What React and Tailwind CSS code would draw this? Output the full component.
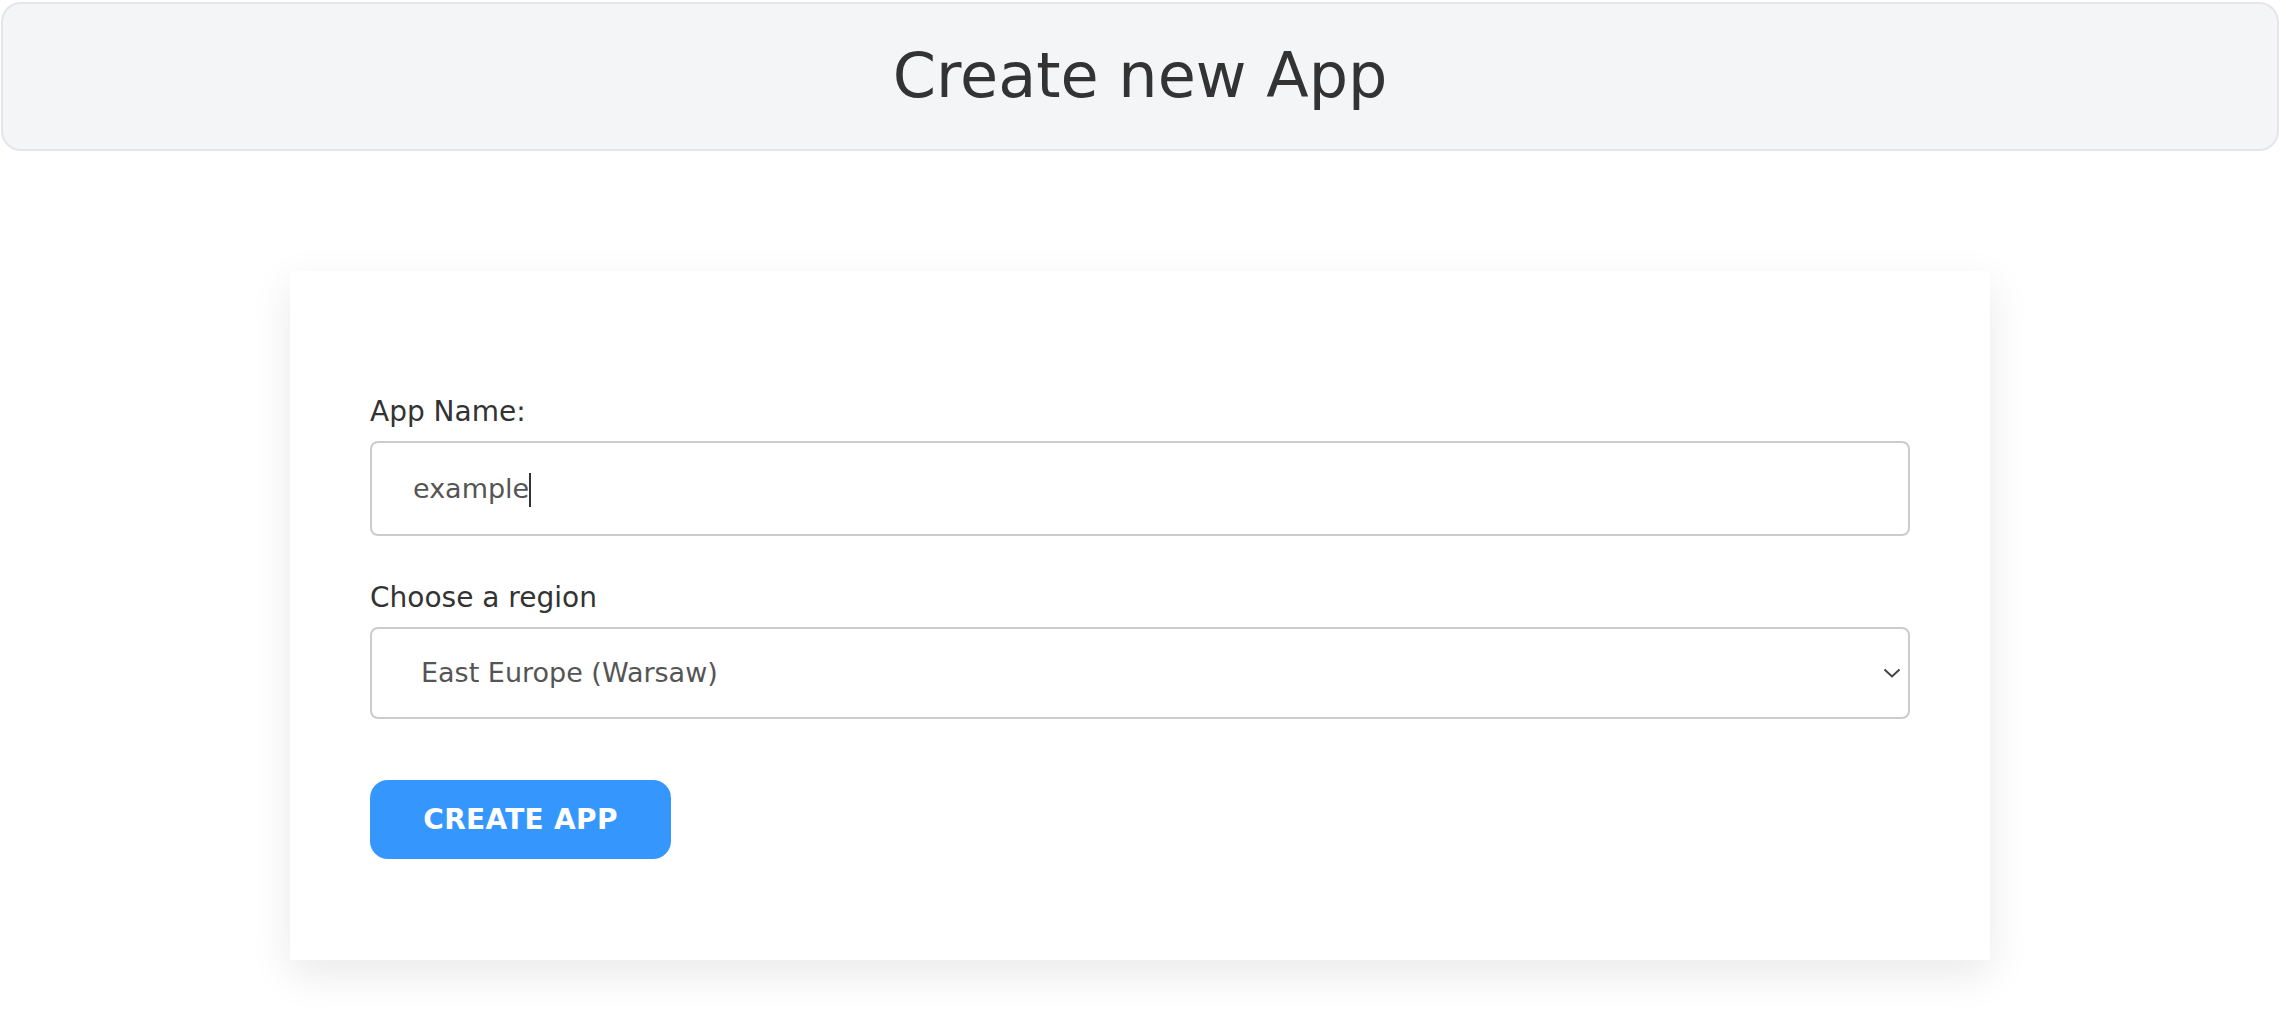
import { useState } from "react";

const font = { fontFamily: '"DejaVu Sans", "Noto Sans", sans-serif' };

function App() {

  const [region, setRegion] =
    useState("warsaw");

  return (

    <div
      className="w-[2280px] min-h-screen bg-white"
      style={font}
    >

      {/* HEADER */}
      <div className="mx-[1px] mt-[2px] h-[149px] bg-[#f4f5f7] border-2 border-[#e4e4ea] rounded-[20px] flex items-center justify-center">

        <h1 className="text-[62px] text-[#333333] leading-none pb-[2px]">
          Create new App
        </h1>

      </div>

      {/* CARD */}
      <div className="flex justify-center pt-[120px] pb-[60px]">

        <div className="w-[1700px] bg-white px-[80px] pt-[124px] pb-[101px] shadow-[0_14px_40px_rgba(0,0,0,0.09)]">

          {/* APP NAME */}
          <label className="block text-[28px] leading-[33px] text-[#333333]">
            App Name:
          </label>

          <div className="mt-[13px] h-[95px] border-2 border-[#cccccc] rounded-[8px] pl-[41px] pt-[2px] flex items-center text-[27px] text-[#555555]">

            <span>example</span>

            <span className="inline-block w-[2px] h-[34px] bg-[#333333]" />

          </div>

          {/* REGION */}
          <label className="block mt-[45px] text-[28px] leading-[33px] text-[#333333]">
            Choose a region
          </label>

          <div className="relative mt-[13px]">

            <select
              value={region}
              onChange={(e) =>
                setRegion(
                  e.target.value
                )
              }
              className="appearance-none w-full h-[92px] border-2 border-[#cccccc] rounded-[8px] pl-[49px] bg-white text-[27px] text-[#555555] outline-none"
              style={font}
            >
              <option value="warsaw">East Europe (Warsaw)</option>
              <option value="frankfurt">Central Europe (Frankfurt)</option>
              <option value="london">West Europe (London)</option>
            </select>

            <svg
              className="absolute right-[9px] top-[41px] pointer-events-none"
              width="18"
              height="10"
              viewBox="0 0 18 10"
              fill="none"
            >
              <polyline
                points="1.5,1.5 9,8.5 16.5,1.5"
                stroke="#444444"
                strokeWidth="2"
              />
            </svg>

          </div>

          {/* BUTTON */}
          <button className="mt-[61px] w-[301px] h-[79px] rounded-[18px] bg-[#3597fe] text-white font-bold text-[28px] tracking-[0.3px]">
            CREATE APP
          </button>

        </div>

      </div>

    </div>
  );
}

export default App;
